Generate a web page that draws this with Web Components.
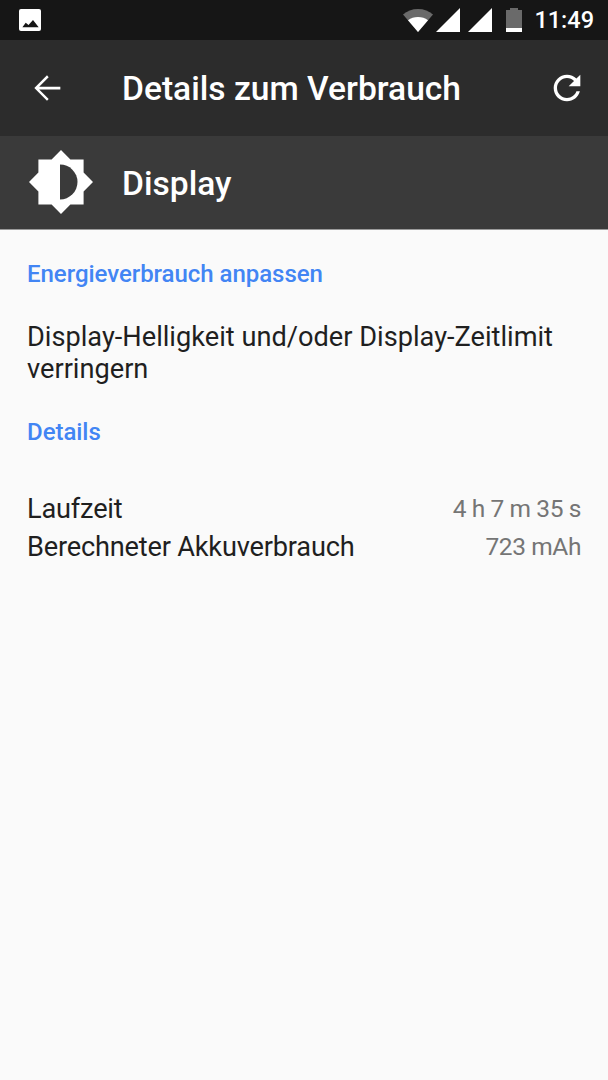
<!DOCTYPE html>
<html lang="de">
<head>
<meta charset="utf-8">
<title>Details zum Verbrauch</title>
<style>
  html, body { margin: 0; padding: 0; height: 100%; background: #fafafa; }
  body { font-family: Roboto, sans-serif; }
</style>
</head>
<body>
<script>
class StatusBar extends HTMLElement {
  constructor() {
    super();
    this.attachShadow({ mode: "open" });
  }

  connectedCallback() {
    this.shadowRoot.innerHTML = `
      <style>
        :host {
          display: flex;
          align-items: center;
          height: 40px;
          box-sizing: border-box;
          padding: 0 14px 0 19px;
          background: #161616;
          color: #fff;
        }
        svg { display: block; }
        .pic { margin-right: auto; }
        .wifi { margin-right: 3px; }
        .sig { margin-right: 8px; }
        .sig.last { margin-right: 0; }
        .bat { margin: 0 12px 0 14px; }
        .time { font: 500 23.500px/40px Roboto, sans-serif; }
      </style>
      <svg class="pic" width="22" height="22" viewBox="0 0 22 22">
        <rect width="22" height="22" rx="2" fill="#fff"/>
        <path d="M3.400 18.300 6.700 13.700 9.500 16 14 11l5.700 7.300z" fill="#161616"/>
      </svg>
      <svg class="wifi" width="30" height="24" viewBox="0 0 30 24">
        <path d="M0 6.500C4 3 9 1 15 1s11 2 15 5.500L15 24z" fill="#6a6a6a"/>
        <path d="M5 12.200C8 10 11 9 15 9s7 1 10 3.200L15 24z" fill="#fff"/>
      </svg>
      <svg class="sig" width="24" height="24" viewBox="0 0 24 24"><path d="M24 0v24H0z" fill="#fff"/></svg>
      <svg class="sig last" width="24" height="24" viewBox="0 0 24 24"><path d="M24 0v24H0z" fill="#fff"/></svg>
      <svg class="bat" width="16" height="24" viewBox="0 0 16 24">
        <path d="M4 0h8v2h4v22H0V2h4z" fill="#6a6a6a"/>
        <rect y="20" width="16" height="4" fill="#fff"/>
      </svg>
      <span class="time">11:49</span>
    `;
  }
}

class AppBar extends HTMLElement {
  constructor() {
    super();
    this.attachShadow({ mode: "open" });
  }

  connectedCallback() {
    this.shadowRoot.innerHTML = `
      <style>
        :host {
          display: flex;
          align-items: center;
          height: 96px;
          box-sizing: border-box;
          padding: 0 21px 0 27px;
          background: #2c2c2c;
          color: #fff;
        }
        h1 {
          flex: 1;
          margin: 2px 0 0 55px;
          font: 500 33.600px/40px Roboto, sans-serif;
        }
        svg { display: block; }
      </style>
      <svg width="40" height="40" viewBox="0 0 24 24">
        <path d="M20 11.200H7.300l5.700-5.700L12 4.400 4.400 12l7.600 7.600 1-1-5.700-5.700H20z" fill="#fff"/>
      </svg>
      <h1><slot></slot></h1>
      <svg width="40" height="40" viewBox="0 0 24 24">
        <path d="M17.650 6.350C16.200 4.900 14.210 4 12 4c-4.420 0-7.990 3.580-7.990 8s3.570 8 7.990 8c3.730 0 6.840-2.550 7.730-6h-2.080c-.82 2.330-3.040 4-5.650 4-3.310 0-6-2.690-6-6s2.690-6 6-6c1.660 0 3.140.69 4.220 1.780L13 11h7V4l-2.350 2.350z" fill="#fff"/>
      </svg>
    `;
  }
}

class AppHeader extends HTMLElement {
  constructor() {
    super();
    this.attachShadow({ mode: "open" });
  }

  connectedCallback() {
    this.shadowRoot.innerHTML = `
      <style>
        :host {
          display: flex;
          align-items: center;
          height: 94px;
          box-sizing: border-box;
          padding-left: 29px;
          background: #3a3a3a;
          border-bottom: 1px solid #9a9a9a;
          color: #fff;
        }
        h2 {
          margin: 2px 0 0 29px;
          font: 500 33.600px/40px Roboto, sans-serif;
        }
        svg { display: block; margin-bottom: 1px; }
      </style>
      <svg width="64" height="64" viewBox="0 0 64 64">
        <path d="M32 0l9.400 9.400H54.600V22.600L64 32l-9.400 9.400V54.600H41.400L32 64l-9.400-9.400H9.400V41.400L0 32l9.400-9.400V9.400H22.600z" fill="#fff"/>
        <path d="M31 14.500a17.500 17.500 0 0 1 0 35z" fill="#3a3a3a"/>
      </svg>
      <h2><slot></slot></h2>
    `;
  }
}

class SectionTitle extends HTMLElement {
  constructor() {
    super();
    this.attachShadow({ mode: "open" });
  }

  connectedCallback() {
    this.shadowRoot.innerHTML = `
      <style>
        :host {
          display: block;
          font: 500 24px/32px Roboto, sans-serif;
          letter-spacing: -.04px;
          color: #4285f4;
        }
      </style>
      <slot></slot>
    `;
  }
}

class UsageRow extends HTMLElement {
  constructor() {
    super();
    this.attachShadow({ mode: "open" });
  }

  connectedCallback() {
    this.shadowRoot.innerHTML = `
      <style>
        :host {
          display: flex;
          justify-content: space-between;
          align-items: center;
          height: 38px;
          font: 400 27.200px/38px Roboto, sans-serif;
          letter-spacing: -.2px;
          color: #1f1f1f;
        }
        .value { font-size: 24.500px; letter-spacing: -.4px; color: #757575; }
      </style>
      <span><slot name="label"></slot></span>
      <span class="value"><slot name="value"></slot></span>
    `;
  }
}

class UsageDetails extends HTMLElement {
  constructor() {
    super();
    this.attachShadow({ mode: "open" });
  }

  connectedCallback() {
    this.shadowRoot.innerHTML = `
      <style>
        :host {
          display: block;
          padding: 28px 27px 0 27px;
          background: #fafafa;
        }
        .hint {
          margin: 31px 0 0;
          font: 400 27.200px/32px Roboto, sans-serif;
          color: #1f1f1f;
        }
        .second { margin-top: 31px; }
        .rows { margin-top: 42px; }
      </style>
      <section-title>Energieverbrauch anpassen</section-title>
      <p class="hint">Display-Helligkeit und/oder Display-Zeitlimit verringern</p>
      <section-title class="second">Details</section-title>
      <div class="rows">
        <usage-row><span slot="label">Laufzeit</span><span slot="value">4 h 7 m 35 s</span></usage-row>
        <usage-row><span slot="label">Berechneter Akkuverbrauch</span><span slot="value">723 mAh</span></usage-row>
      </div>
    `;
  }
}

customElements.define("status-bar", StatusBar);
customElements.define("app-bar", AppBar);
customElements.define("app-header", AppHeader);
customElements.define("section-title", SectionTitle);
customElements.define("usage-row", UsageRow);
customElements.define("usage-details", UsageDetails);

document.body.innerHTML = `
  <status-bar></status-bar>
  <app-bar>Details zum Verbrauch</app-bar>
  <app-header>Display</app-header>
  <usage-details></usage-details>
`;
</script>
</body>
</html>
